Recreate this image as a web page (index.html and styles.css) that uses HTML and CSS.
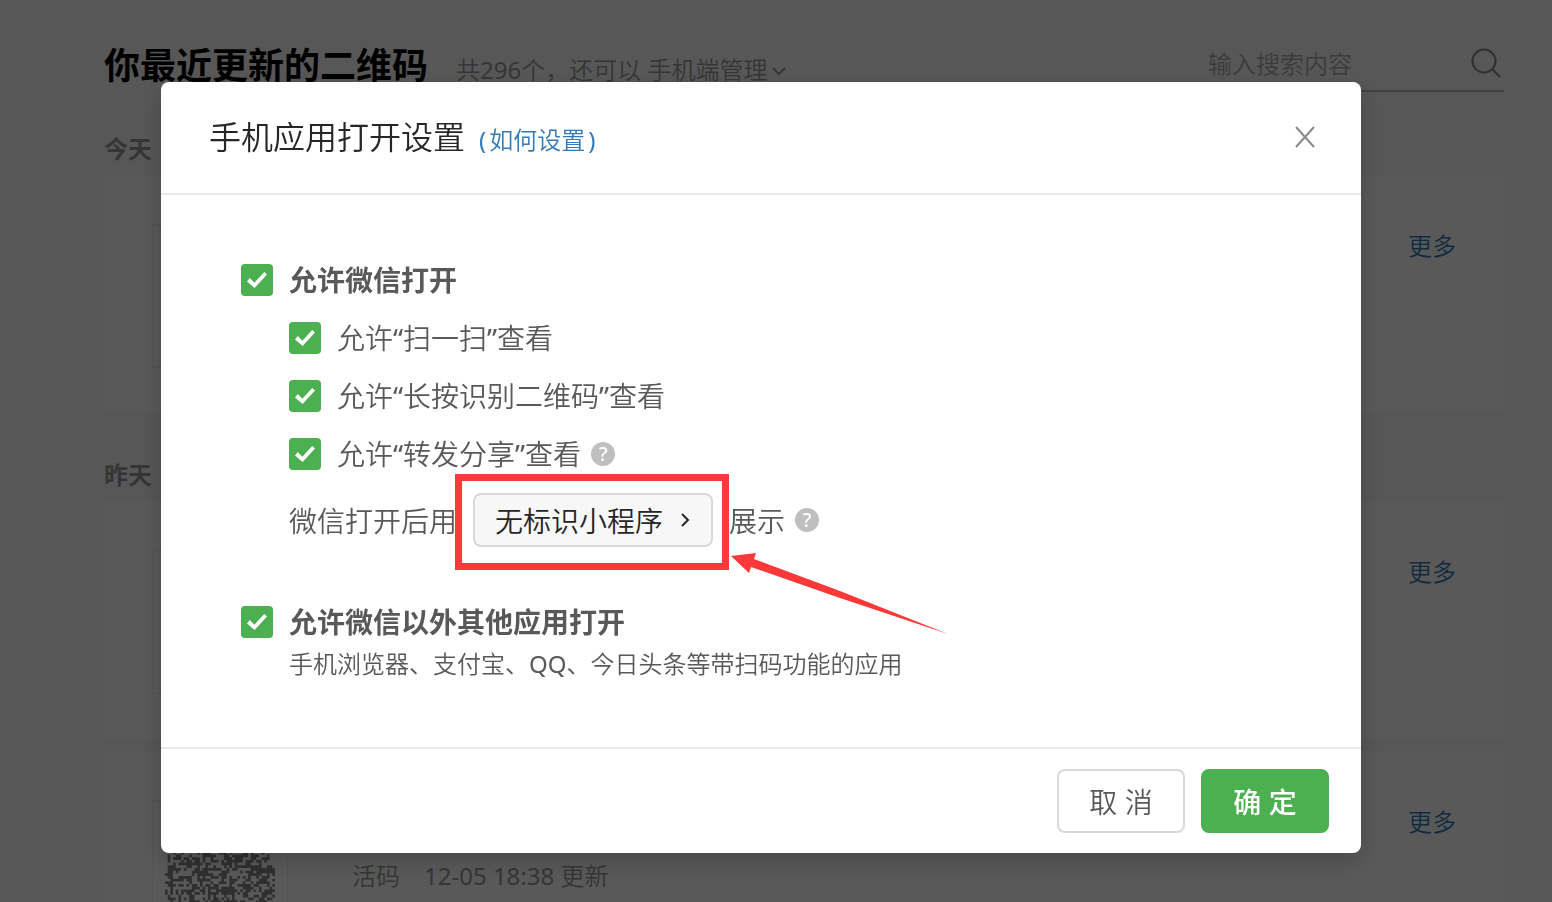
FILE: index.html
```html
<!DOCTYPE html>
<html lang="zh-CN">
<head>
<meta charset="utf-8">
<title>你最近更新的二维码</title>
<link rel="stylesheet" href="styles.css">
</head>
<body>
<main class="page">
  <header class="page-head">
    <div class="head-left">
      <h1>你最近更新的二维码</h1>
      <p class="summary">共296个，还可以 <a href="#">手机端管理<svg class="chev-down" viewBox="0 0 16 16" aria-hidden="true"><path d="M2 5l6 6 6-6"/></svg></a></p>
    </div>
    <form class="search">
      <input type="text" placeholder="输入搜索内容" aria-label="输入搜索内容">
      <button type="button" aria-label="搜索"><svg viewBox="0 0 32 32"><circle cx="14" cy="14" r="11.500"/><path d="M22 22l8 8"/></svg></button>
    </form>
  </header>
  <h2>今天</h2>
  <article class="card"><div class="thumb"></div><a class="more" href="#">更多</a></article>
  <h2 class="yesterday">昨天</h2>
  <article class="card"><div class="thumb"></div><a class="more" href="#">更多</a></article>
  <article class="card">
    <div class="thumb"><svg class="qr" viewBox="0 0 41 41" aria-hidden="true"><path id="qr"/></svg></div>
    <p class="meta"><span>活码</span><span>12-05 18:38 更新</span></p>
    <a class="more" href="#">更多</a>
  </article>
</main>
<div class="overlay">
  <section class="modal" role="dialog" aria-labelledby="title">
    <header class="modal-head">
      <h3 id="title">手机应用打开设置</h3>
      <a class="howto" href="#"><span>(</span><span>如何设置</span><span>)</span></a>
      <button class="close" type="button" aria-label="关闭"><svg viewBox="0 0 20 22"><path d="M1 1l18 20M19 1L1 21"/></svg></button>
    </header>
    <div class="modal-body">
      <label class="check strong"><input type="checkbox" checked>允许微信打开</label>
      <div class="sub">
        <label class="check"><input type="checkbox" checked>允许“扫一扫”查看</label>
        <label class="check"><input type="checkbox" checked>允许“长按识别二维码”查看</label>
        <div class="line"><label class="check"><input type="checkbox" checked>允许“转发分享”查看</label><button class="help" type="button">?</button></div>
        <div class="line open-with">
          <span>微信打开后用</span>
          <span class="picker-wrap">
            <button class="picker" type="button">无标识小程序<svg viewBox="0 0 10 16"><path d="M1 2l6 6-6 6"/></svg></button>
            <span class="mark"></span>
            <svg class="arrow" viewBox="0 0 218 82" aria-hidden="true"><path d="M0 4L25 1 23 7 109 39 217 82 109 46 20 15 18 21Z"/></svg>
          </span>
          <span>展示</span><button class="help" type="button">?</button>
        </div>
      </div>
      <label class="check strong other"><input type="checkbox" checked>允许微信以外其他应用打开</label>
      <p class="note">手机浏览器、支付宝、QQ、今日头条等带扫码功能的应用</p>
    </div>
    <footer class="modal-foot">
      <button class="btn" type="button">取 消</button>
      <button class="btn primary" type="button">确 定</button>
    </footer>
  </section>
</div>
<script src="qr.js"></script>
</body>
</html>
```
FILE: styles.css
```css
* { box-sizing: border-box; }
html, body { height: 100%; }
body {
  margin: 0;
  overflow: hidden;
  background: #f9f9f9;
  color: #595959;
  font-family: "Noto Sans", "Noto Sans CJK SC DemiLight", "Noto Sans CJK SC", sans-serif;
  font-size: 28px;
  font-weight: 400;
}
h1, h2, h3, p { margin: 0; }
a { color: #337ab7; text-decoration: none; }
button, input { font: inherit; color: inherit; }
button { padding: 0; border: 0; background: none; }
svg { fill: none; stroke: currentColor; }
h1, h2, .strong, .primary { font-family: "Noto Sans", "Noto Sans CJK SC", sans-serif; }

.page { height: 100%; overflow: hidden; padding: 40px 48px 0 104px; }
.page-head { display: flex; justify-content: space-between; height: 52px; }
.head-left { display: flex; align-items: baseline; gap: 28px; line-height: 52px; }
h1 { color: #000; font-size: 36px; font-weight: 700; }
.summary, .summary a { color: #999; font-size: 24px; }
.chev-down { width: 16px; height: 16px; margin-left: 4px; stroke-width: 2; }
.search { display: flex; align-items: center; width: 300px; height: 52px; padding-bottom: 4px; border-bottom: 2px solid #bbb; }
.search input { flex: 1; min-width: 0; padding: 0 0 0 4px; border: 0; background: none; font-size: 24px; }
.search input::placeholder { color: #aaa; opacity: 1; }
.search button { width: 32px; height: 32px; margin-right: 2px; color: #888; }
.search button svg { width: 32px; height: 32px; stroke-width: 2; }
h2 { margin: 40px 0 10px; color: #999; font-size: 24px; line-height: 34px; font-weight: 700; }
.yesterday { margin-top: 46px; }
.card { display: flex; height: 236px; margin-bottom: 14px; padding: 48px; background: #fff; }
.thumb { width: 136px; height: 144px; padding: 0 12px; border: 1px solid #f0f0f0; }
.qr { display: block; width: 110px; height: 110px; margin-top: 16px; }
.qr path { fill: #888; stroke: none; }
.meta { display: flex; gap: 24px; margin: 60px 0 0 64px; color: #999; font-size: 24px; line-height: 32px; }
.more { margin-left: auto; font-size: 24px; line-height: 44px; }

.overlay { position: fixed; inset: 0; padding: 82px 30px 0 0; background: rgba(0, 0, 0, .65); }
.modal { width: 80%; max-width: 1200px; min-width: 1000px; margin: 0 auto; border-radius: 8px; background: #fff; box-shadow: 0 8px 24px rgba(0, 0, 0, .2); }
.modal-head { display: flex; align-items: baseline; gap: 14px; padding: 32px 46px 33px 48px; border-bottom: 2px solid #e8e8e8; }
h3 { color: #262626; font-size: 32px; line-height: 46px; font-weight: 400; }
.howto { display: flex; gap: 3px; font-size: 24px; line-height: 34px; }
.close { width: 20px; height: 22px; margin-left: auto; align-self: center; color: #888; }
.close svg { display: block; width: 20px; height: 22px; stroke-width: 2; }
.modal-body { padding: 64px 80px 62px; }
.check { display: flex; align-items: center; gap: 16px; width: max-content; line-height: 42px; }
.check input {
  appearance: none;
  width: 32px;
  height: 32px;
  margin: 0;
  border-radius: 4px;
  background: #4caf50;
  display: grid;
  place-items: center;
}
.check input::before { content: ""; width: 20px; height: 16px; background: #fff; clip-path: polygon(0 60%, 14% 38%, 37% 67%, 86% 0, 100% 16%, 38% 100%); }
.strong { font-weight: 700; }
.sub { display: grid; gap: 16px; margin: 16px 0 0 48px; }
.line { display: flex; align-items: center; gap: 10px; }
.help { width: 24px; height: 24px; border-radius: 50%; background: #bfbfbf; color: #fff; font-size: 20px; line-height: 24px; font-weight: 500; text-align: center; }
.open-with { margin-top: 2px; }
.open-with > .picker-wrap { margin: 0 6px; }
.picker-wrap { position: relative; }
.picker { display: flex; align-items: center; gap: 18px; height: 54px; padding: 0 20px; border: 2px solid #d9d9d9; border-radius: 8px; background: #f7f7f7; color: #262626; }
.picker svg { width: 10px; height: 16px; stroke-width: 2; }
.mark { position: absolute; inset: -19px -16px -23px -18px; border: 7px solid #fa3939; pointer-events: none; }
.arrow { position: absolute; top: 59px; left: 258px; width: 218px; height: 82px; pointer-events: none; }
.arrow path { fill: #fc3838; stroke: none; }
.other { margin-top: 54px; }
.note { margin-left: 48px; font-size: 24px; line-height: 42px; }
.modal-foot { display: flex; justify-content: flex-end; gap: 16px; padding: 20px 32px; border-top: 2px solid #e8e8e8; }
.btn { width: 128px; height: 64px; border: 2px solid #d9d9d9; border-radius: 8px; }
.primary { border-color: #4caf50; background: #4caf50; color: #fff; font-weight: 500; }
```
FILE: qr.js
```js
const size = 41;
let seed = 7;
let d = "";
for (let y = 0; y < size; y++) {
  for (let x = 0; x < size; x++) {
    seed = (seed * 16807) % 2147483647;
    if (seed / 2147483647 < 0.55) d += `M${x} ${y}h1v1h-1z`;
  }
}
document.getElementById("qr").setAttribute("d", d);
```
